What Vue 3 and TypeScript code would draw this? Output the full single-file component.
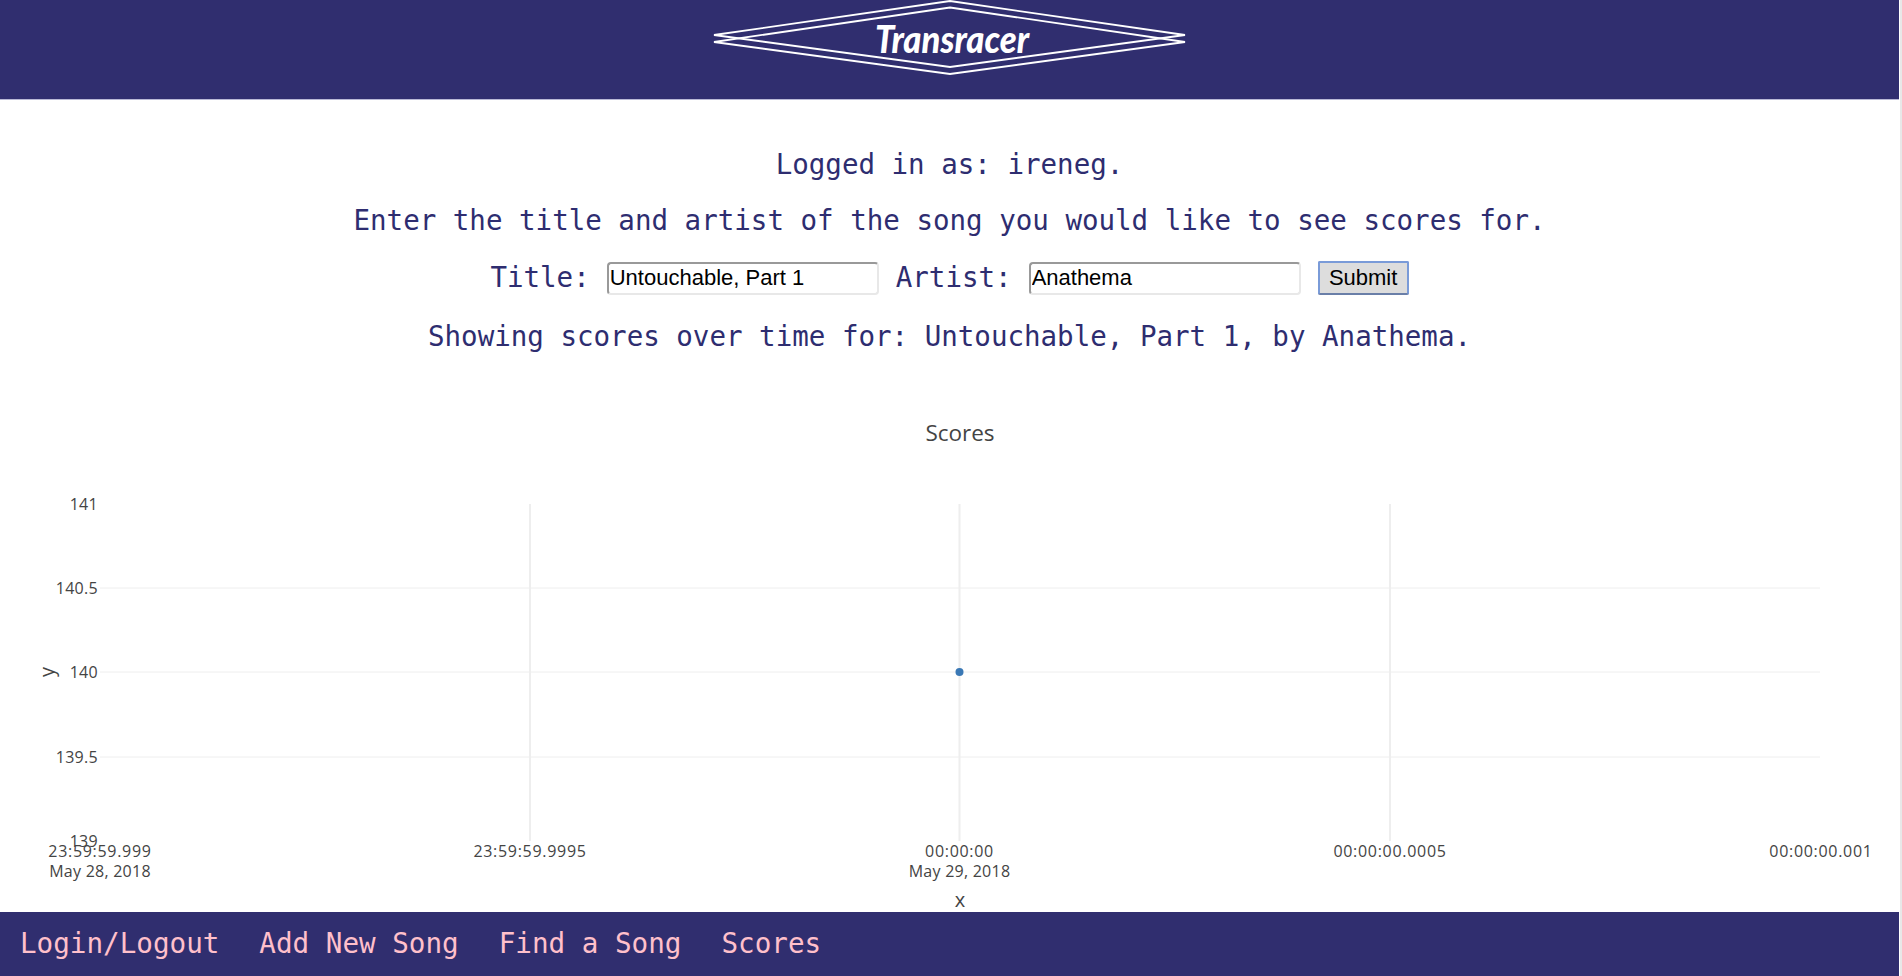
<script setup lang="ts">
interface Tick {
  label: string
  y: number
}

interface TimeTick {
  label: string
  date?: string
  x: number
}

const navLinks = ['Login/Logout', 'Add New Song', 'Find a Song', 'Scores']

const yTicks: Tick[] = [
  { label: '141', y: 504 },
  { label: '140.5', y: 588 },
  { label: '140', y: 672 },
  { label: '139.5', y: 757 },
  { label: '139', y: 841 }
]

const xTicks: TimeTick[] = [
  { label: '23:59:59.999', date: 'May 28, 2018', x: 100 },
  { label: '23:59:59.9995', x: 530 },
  { label: '00:00:00', date: 'May 29, 2018', x: 959.5 },
  { label: '00:00:00.0005', x: 1390 },
  { label: '00:00:00.001', x: 1821 }
]

const gridX = [530, 959.5, 1390]
const gridY = [588, 672, 757]
</script>

<template>
  <div class="page">
    <div class="main">
      <header class="top-bar">
        <svg class="logo" viewBox="0 0 474 80" width="474" height="80">
          <polygon class="diamond" points="237,1 472,35 237,67 1,35" />
          <polygon class="diamond" points="237,7.5 472,42 237,74 1,42" />
          <text class="logo-text" x="162" y="53" textLength="154" lengthAdjust="spacingAndGlyphs">Transracer</text>
        </svg>
      </header>

      <section class="content">
        <p class="line">Logged in as: ireneg.</p>
        <p class="line">Enter the title and artist of the song you would like to see scores for.</p>
        <form class="song-form" @submit.prevent>
          <label for="title">Title:</label>
          <input id="title" type="text" value="Untouchable, Part 1" />
          <label for="artist">Artist:</label>
          <input id="artist" type="text" value="Anathema" />
          <button type="submit">Submit</button>
        </form>
        <p class="line">Showing scores over time for: Untouchable, Part 1, by Anathema.</p>
      </section>

      <svg class="chart" viewBox="0 352 1899 560">
        <line v-for="y in gridY" :key="y" class="grid" x1="100" x2="1820" :y1="y" :y2="y" />
        <line v-for="x in gridX" :key="x" class="grid grid-v" :x1="x" :x2="x" y1="504" y2="841" />
        <circle cx="959.5" cy="672" r="4" fill="#3a78b5" />

        <text class="chart-title" x="960" y="441">Scores</text>
        <text v-for="tick in yTicks" :key="tick.label" class="tick y-tick" x="98" :y="tick.y + 6">{{ tick.label }}</text>
        <template v-for="tick in xTicks" :key="tick.label">
          <text class="tick x-tick" :x="tick.x" y="857">{{ tick.label }}</text>
          <text v-if="tick.date" class="tick date-tick" :x="tick.x" y="877">{{ tick.date }}</text>
        </template>
        <text class="axis-title" x="960" y="907">x</text>
        <text class="axis-title" transform="rotate(-90 49 672)" x="49" y="677">y</text>
      </svg>

      <nav class="bottom-bar">
        <a v-for="link in navLinks" :key="link" href="#" class="nav-link">{{ link }}</a>
      </nav>
    </div>
    <div class="scroll-strip"></div>
  </div>
</template>

<style>
body {
  margin: 0;
  overflow: hidden;
  background: white;
}
</style>

<style scoped>
.page {
  display: flex;
  height: 976px;
  background: white;
}

.main {
  flex: 1;
  display: flex;
  flex-direction: column;
  min-width: 0;
}

.scroll-strip {
  width: 2px;
  margin-left: 1px;
  background: #e8e8e8;
}

.top-bar {
  height: 100px;
  flex: none;
  background: #302e6f;
  display: flex;
  justify-content: center;
  border-bottom: 1px solid #b9b9d6;
  box-sizing: border-box;
}

.logo {
  display: block;
}

.diamond {
  fill: none;
  stroke: white;
  stroke-width: 1.8;
}

.logo-text {
  font-family: Lato, sans-serif;
  font-size: 38px;
  font-weight: 900;
  font-style: italic;
  fill: white;
}

.content {
  flex: none;
  padding-top: 48px;
  text-align: center;
  color: #2e2d70;
  font-family: 'DejaVu Sans Mono', monospace;
  font-size: 27.5px;
  height: 204px;
}

.line {
  margin: 0 0 24px;
  line-height: 32px;
}

.song-form {
  display: flex;
  justify-content: center;
  align-items: center;
  gap: 17px;
  height: 34px;
  margin: 0 0 26px;
}

.song-form input {
  width: 272px;
  height: 33px;
  margin-top: 2px;
  box-sizing: border-box;
  padding: 0 1px;
  border: 2px solid #e8e8e8;
  border-top-color: #999;
  border-left-color: #999;
  border-radius: 4px;
  outline: none;
  font-family: 'Liberation Sans', Arial, sans-serif;
  font-size: 22px;
  color: black;
}

.song-form button {
  width: 91px;
  height: 34px;
  margin-top: 2px;
  padding: 0;
  box-sizing: border-box;
  border: 2px solid #7a9bd8;
  border-bottom-color: #6a7fa8;
  border-radius: 2px;
  background: #dddddd;
  font-family: 'Liberation Sans', Arial, sans-serif;
  font-size: 22px;
  color: black;
}

.chart {
  flex: 1;
  display: block;
  width: 100%;
  min-height: 0;
}

.grid {
  stroke: #eeeeee;
  stroke-width: 1;
}

.grid-v {
  stroke-width: 2;
}

.chart-title {
  font-family: 'Open Sans', sans-serif;
  font-size: 22.5px;
  fill: #444;
  text-anchor: middle;
}

.tick {
  font-family: 'Open Sans', sans-serif;
  font-size: 16px;
  fill: #444;
}

.y-tick {
  text-anchor: end;
  letter-spacing: 0.3px;
}

.x-tick {
  text-anchor: middle;
  letter-spacing: 0.7px;
}

.date-tick {
  text-anchor: middle;
  letter-spacing: 0.25px;
}

.axis-title {
  font-family: 'Open Sans', sans-serif;
  font-size: 20px;
  fill: #444;
  text-anchor: middle;
}

.bottom-bar {
  flex: none;
  height: 64px;
  box-sizing: border-box;
  padding: 0 0 2px 20px;
  background: #302e6f;
  display: flex;
  align-items: center;
  gap: 40px;
}

.nav-link {
  color: #ffc0cb;
  text-decoration: none;
  font-family: 'DejaVu Sans Mono', monospace;
  font-size: 27.6px;
}
</style>
